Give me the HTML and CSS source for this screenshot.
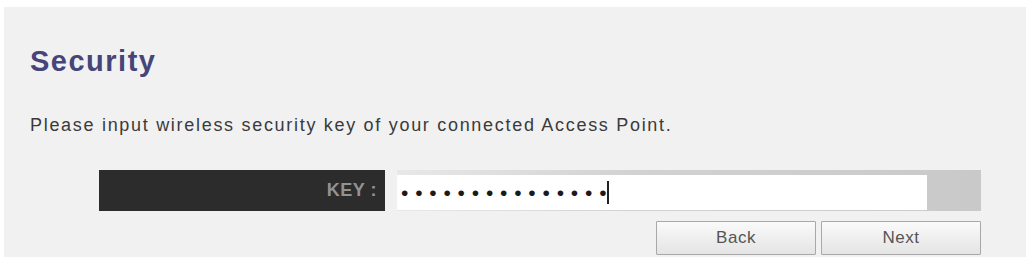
FILE: index.html
```html
<!DOCTYPE html>
<html>
<head>
<meta charset="utf-8">
<link rel="stylesheet" href="styles.css">
</head>
<body>
<div class="panel">
  <h1 class="title">Security</h1>
  <p class="desc">Please input wireless security key of your connected Access Point.</p>
  <div class="form">
    <div class="key-row">
      <div class="key-label">KEY :</div>
      <div class="key-cell">
        <div class="key-input"><span class="dots">•••••••••••••••</span><span class="caret"></span></div>
      </div>
    </div>
    <div class="buttons">
      <button class="btn">Back</button>
      <button class="btn">Next</button>
    </div>
  </div>
</div>
</body>
</html>
```
FILE: styles.css
```css
html, body {
  margin: 0;
  padding: 0;
  background: #ffffff;
}
body {
  font-family: "Liberation Sans", Arial, sans-serif;
}
.panel {
  margin: 7px 8px 0 4px;
  height: 250px;
  background: #f1f1f1;
  padding: 37px 0 0 26px;
  box-sizing: border-box;
}
.title {
  margin: 0;
  font-size: 29px;
  line-height: 34px;
  font-weight: bold;
  color: #45457a;
  letter-spacing: 1.5px;
}
.desc {
  margin: 37px 0 0 0;
  font-size: 18px;
  line-height: 20px;
  color: #3a3a3a;
  letter-spacing: 1.7px;
}
.form {
  margin: 35px 0 0 69px;
  width: 882px;
}
.key-row {
  display: flex;
  gap: 12px;
  height: 41px;
}
.key-label {
  width: 286px;
  background: #2c2c2c;
  color: #929292;
  font-size: 18px;
  font-weight: bold;
  letter-spacing: 0.5px;
  display: flex;
  align-items: center;
  justify-content: flex-end;
  padding-right: 8px;
  box-sizing: border-box;
}
.key-cell {
  flex: 1;
  background: linear-gradient(to right, #e8e8e8 0%, #d2d2d2 40%, #c9c9c9 100%);
  padding: 5px 54px 1px 0;
}
.key-input {
  height: 35px;
  background: #ffffff;
  display: flex;
  align-items: center;
  padding-left: 4px;
}
.dots {
  font-size: 21px;
  letter-spacing: 6.8px;
  color: #1a1a1a;
}
.caret {
  width: 2px;
  height: 23px;
  background: #222;
  margin-left: -6px;
}
.buttons {
  display: flex;
  justify-content: flex-end;
  gap: 5px;
  margin-top: 10px;
}
.btn {
  width: 160px;
  height: 34px;
  border: 1px solid #a8a8a8;
  border-radius: 1px;
  background: linear-gradient(to bottom, #fafafa, #e4e4e4);
  color: #555555;
  font-family: "Liberation Sans", Arial, sans-serif;
  font-size: 17px;
  letter-spacing: 0.5px;
  padding: 0;
}
```
